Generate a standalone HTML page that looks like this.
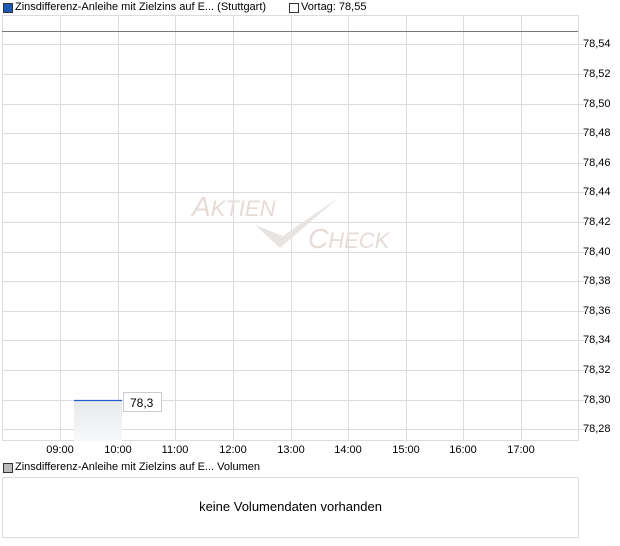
<!DOCTYPE html><html><head><style>
body{margin:0;width:620px;height:546px;background:#fff;font-family:"Liberation Sans",sans-serif;font-size:11px;color:#000;position:relative;overflow:hidden}
.a{position:absolute}
.sq{position:absolute;width:8px;height:8px;border:1px solid #333}
.yl{position:absolute;left:583px;font-size:11px}
.xl{position:absolute;top:444px;width:40px;margin-left:-20px;text-align:center}
</style></head><body>
<div class="sq" style="left:3px;top:3px;background:#1f57b5"></div>
<div class="a" style="left:15px;top:1px">Zinsdifferenz-Anleihe mit Zielzins auf E... (Stuttgart)</div>
<div class="sq" style="left:289px;top:3px;background:#fff"></div>
<div class="a" style="left:301px;top:1px">Vortag: 78,55</div>
<svg class="a" style="left:0;top:0" width="620" height="546">
<g stroke="#dcdcdc" stroke-width="1">
<rect x="2.5" y="15.5" width="576" height="425" fill="none"/>
<line x1="60.5" y1="15" x2="60.5" y2="441"/><line x1="118.5" y1="15" x2="118.5" y2="441"/><line x1="175.5" y1="15" x2="175.5" y2="441"/><line x1="233.5" y1="15" x2="233.5" y2="441"/><line x1="291.5" y1="15" x2="291.5" y2="441"/><line x1="348.5" y1="15" x2="348.5" y2="441"/><line x1="406.5" y1="15" x2="406.5" y2="441"/><line x1="463.5" y1="15" x2="463.5" y2="441"/><line x1="521.5" y1="15" x2="521.5" y2="441"/>
<line x1="2" y1="44.5" x2="584" y2="44.5"/><line x1="2" y1="74.5" x2="584" y2="74.5"/><line x1="2" y1="104.5" x2="584" y2="104.5"/><line x1="2" y1="133.5" x2="584" y2="133.5"/><line x1="2" y1="163.5" x2="584" y2="163.5"/><line x1="2" y1="192.5" x2="584" y2="192.5"/><line x1="2" y1="222.5" x2="584" y2="222.5"/><line x1="2" y1="252.5" x2="584" y2="252.5"/><line x1="2" y1="281.5" x2="584" y2="281.5"/><line x1="2" y1="311.5" x2="584" y2="311.5"/><line x1="2" y1="340.5" x2="584" y2="340.5"/><line x1="2" y1="370.5" x2="584" y2="370.5"/><line x1="2" y1="400.5" x2="584" y2="400.5"/><line x1="2" y1="429.5" x2="584" y2="429.5"/>
<rect x="2.5" y="477.5" width="576" height="60" fill="none"/>
</g>
<line x1="2" y1="31.5" x2="578" y2="31.5" stroke="#777"/>
<defs><linearGradient id="g" x1="0" y1="0" x2="0" y2="1"><stop offset="0" stop-color="#e6e8ea"/><stop offset="1" stop-color="#f8f9fa"/></linearGradient></defs>
<rect x="74" y="400" width="48" height="41" fill="url(#g)"/>
<line x1="74" y1="400.5" x2="122" y2="400.5" stroke="#1f5fcc" stroke-width="1.2"/>
<rect x="123.5" y="392.5" width="38" height="19" fill="#fff" stroke="#ccc"/>
<text x="130" y="407" font-family="Liberation Sans" font-size="12">78,3</text>
<g fill="#e5dcd8" font-family="Liberation Sans" font-style="italic" font-size="28">
<text x="192" y="216">A<tspan font-size="22">KTIEN</tspan></text>
<text x="308" y="248">C<tspan font-size="22">HECK</tspan></text>
</g>
<path d="M255 225 L280 248 L338 198 L283 236 Z" fill="#e8e4e2"/>
</svg>
<div class="yl" style="top:38px">78,54</div><div class="yl" style="top:68px">78,52</div><div class="yl" style="top:98px">78,50</div><div class="yl" style="top:127px">78,48</div><div class="yl" style="top:157px">78,46</div><div class="yl" style="top:186px">78,44</div><div class="yl" style="top:216px">78,42</div><div class="yl" style="top:246px">78,40</div><div class="yl" style="top:275px">78,38</div><div class="yl" style="top:305px">78,36</div><div class="yl" style="top:334px">78,34</div><div class="yl" style="top:364px">78,32</div><div class="yl" style="top:394px">78,30</div><div class="yl" style="top:423px">78,28</div>
<div class="xl" style="left:60px">09:00</div><div class="xl" style="left:118px">10:00</div><div class="xl" style="left:175px">11:00</div><div class="xl" style="left:233px">12:00</div><div class="xl" style="left:291px">13:00</div><div class="xl" style="left:348px">14:00</div><div class="xl" style="left:406px">15:00</div><div class="xl" style="left:463px">16:00</div><div class="xl" style="left:521px">17:00</div>
<div class="sq" style="left:3px;top:463px;background:#bbb"></div>
<div class="a" style="left:15px;top:461px">Zinsdifferenz-Anleihe mit Zielzins auf E... Volumen</div>
<div class="a" style="left:2px;top:499px;width:577px;text-align:center;font-size:13px">keine Volumendaten vorhanden</div>
</body></html>
